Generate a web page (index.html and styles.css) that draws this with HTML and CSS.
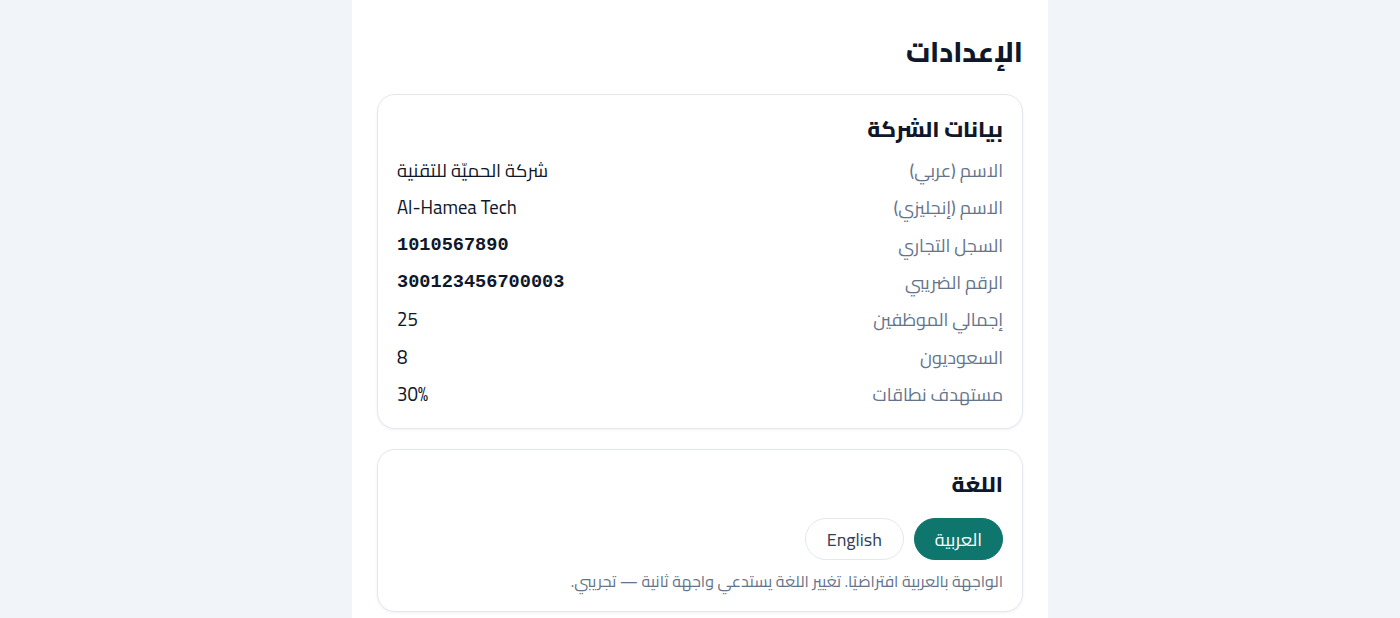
FILE: index.html
```html
<!DOCTYPE html>
<html lang="ar" dir="rtl">
<head>
<meta charset="utf-8">
<title>الإعدادات</title>
<link rel="stylesheet" href="styles.css">
</head>
<body>
<main class="panel">
  <h1 class="page-title">الإعدادات</h1>

  <section class="card">
    <h2 class="card-title">بيانات الشركة</h2>
    <dl class="info">
      <div class="row"><dt>الاسم (عربي)</dt><dd>شركة الحميّة للتقنية</dd></div>
      <div class="row"><dt>الاسم (إنجليزي)</dt><dd dir="ltr">Al-Hamea Tech</dd></div>
      <div class="row"><dt>السجل التجاري</dt><dd class="mono" dir="ltr">1010567890</dd></div>
      <div class="row"><dt>الرقم الضريبي</dt><dd class="mono" dir="ltr">300123456700003</dd></div>
      <div class="row"><dt>إجمالي الموظفين</dt><dd>25</dd></div>
      <div class="row"><dt>السعوديون</dt><dd>8</dd></div>
      <div class="row"><dt>مستهدف نطاقات</dt><dd dir="ltr">30%</dd></div>
    </dl>
  </section>

  <section class="card">
    <h2 class="card-title">اللغة</h2>
    <div class="lang-buttons">
      <button class="btn btn-primary">العربية</button>
      <button class="btn btn-outline">English</button>
    </div>
    <p class="note">الواجهة بالعربية افتراضيًا. تغيير اللغة يستدعي واجهة ثانية — تجريبي.</p>
  </section>
</main>
</body>
</html>
```

FILE: styles.css
```css
* { box-sizing: border-box; }
html, body { margin: 0; padding: 0; }
body {
  background: #f1f5f9;
  font-family: "Cairo", sans-serif;
  color: #0f172a;
}
.panel {
  width: 696px;
  margin: 0 auto;
  min-height: 100vh;
  background: #ffffff;
  padding: 30px 25px 24px;
}
.page-title {
  margin: 0 0 20px;
  font-size: 28px;
  font-weight: 800;
  line-height: 44px;
  color: #0f172a;
}
.card {
  background: #fff;
  border: 1.5px solid #e2e8f0;
  border-radius: 18px;
  padding: 16px 19px 15px;
  margin-bottom: 20px;
  box-shadow: 0 1px 3px rgba(15, 23, 42, 0.06);
}
.card-title {
  margin: 0 0 5px;
  font-size: 22px;
  font-weight: 800;
  line-height: 36px;
}
.info { margin: 0; }
.row {
  display: flex;
  justify-content: space-between;
  align-items: center;
  height: 37.3px;
  font-size: 18px;
}
.row dt { color: #64748b; }
.row dd { margin: 0; color: #0f172a; font-size: 18.6px; }
.row dd.mono {
  font-family: "Liberation Mono", monospace;
  font-weight: 700;
  font-size: 18.6px;
}
.lang-buttons {
  display: flex;
  gap: 10px;
  margin-top: 16px;
}
.btn {
  height: 42px;
  border-radius: 21px;
  font-family: inherit;
  font-size: 18px;
  padding: 0 20px;
  cursor: pointer;
}
.btn-primary {
  background: #0f766e;
  color: #fff;
  border: 1.5px solid #0f766e;
}
.btn-outline {
  background: #fff;
  color: #334155;
  border: 1.5px solid #e2e8f0;
  padding: 0 21px;
}
.note {
  margin: 11px 0 0;
  font-size: 16px;
  line-height: 20px;
  color: #64748b;
  padding-bottom: 5px;
}
```
